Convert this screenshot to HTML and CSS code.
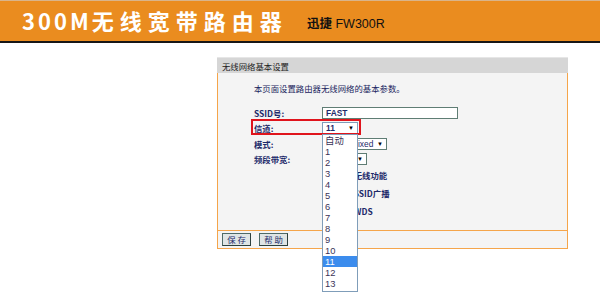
FILE: index.html
```html
<!DOCTYPE html>
<html lang="zh-CN">
<head>
<meta charset="utf-8">
<title>300M无线宽带路由器</title>
<link rel="stylesheet" href="styles.css">
</head>
<body>
<header class="topbar">
  <div class="brand"><span class="brand-num">300M</span>无线宽带路由器</div>
  <div class="model"><span class="model-cn">迅捷</span> FW300R</div>
</header>

<section class="panel">
  <div class="panel-head">无线网络基本设置</div>
  <div class="panel-body">
    <div class="intro">本页面设置路由器无线网络的基本参数。</div>
    <div class="form">
      <div class="row r15">
        <div class="label">SSID号:</div>
        <div class="ctl"><div class="input">FAST</div></div>
      </div>
      <div class="row r16 channel-row">
        <div class="label">信道:</div>
        <div class="ctl">
          <div class="select sel-open"><span>11</span><span class="arrow">▼</span></div>
        </div>
        <div class="mark"></div>
        <ul class="droplist">
          <li>自动</li><li>1</li><li>2</li><li>3</li><li>4</li><li>5</li><li>6</li>
          <li>7</li><li>8</li><li>9</li><li>10</li><li class="active">11</li><li>12</li><li>13</li>
        </ul>
      </div>
      <div class="row r15">
        <div class="label">模式:</div>
        <div class="ctl"><div class="select sel-mode"><span>11bgn mixed</span><span class="arrow">▼</span></div></div>
      </div>
      <div class="row r15">
        <div class="label">频段带宽:</div>
        <div class="ctl"><div class="select sel-bw"><span>自动</span><span class="arrow">▼</span></div></div>
      </div>
      <div class="row r18">
        <div class="label"></div>
        <div class="ctl"><span class="box"></span><span class="cbtext">开启无线功能</span></div>
      </div>
      <div class="row r18">
        <div class="label"></div>
        <div class="ctl"><span class="box"></span><span class="cbtext">开启SSID广播</span></div>
      </div>
      <div class="row r18">
        <div class="label"></div>
        <div class="ctl"><span class="box"></span><span class="cbtext">开启WDS</span></div>
      </div>
    </div>
  </div>
  <div class="panel-foot">
    <button class="btn">保存</button>
    <button class="btn">帮助</button>
  </div>
</section>
</body>
</html>
```
FILE: styles.css
```css
* { box-sizing: border-box; }
html, body { margin: 0; padding: 0; background: #ffffff; }
html { height: 300px; }
body {
  height: 300px;
  overflow: hidden;
  font-family: "Noto Sans CJK SC", "Liberation Sans", sans-serif;
  color: #1d2a6a;
}

.topbar {
  height: 43px;
  background: #ea8c1f;
  border-top: 1px solid #d9b48a;
  border-bottom: 2px solid #161616;
  display: flex;
  align-items: center;
  padding-left: 22px;
}
.brand {
  color: #ffffff;
  font-family: "Noto Sans CJK SC", "Liberation Sans", sans-serif;
  font-weight: bold;
  font-size: 22px;
  letter-spacing: 6px;
  line-height: 26px;
  margin-top: -3px;
  width: 285px;
  white-space: nowrap;
}
.brand-num { letter-spacing: 3px; }
.model {
  color: #111111;
  font-family: "Liberation Sans", "Noto Sans CJK SC", sans-serif;
  font-size: 12.5px;
  line-height: 14px;
  margin-top: 5px;
  white-space: nowrap;
}
.model-cn { font-family: "Noto Sans CJK SC", serif; font-weight: bold; }

.panel {
  margin: 14px 0 0 217px;
  width: 351px;
  font-size: 8.4px;
}
.panel-head {
  height: 16px;
  line-height: 16px;
  background: #d6d6d6;
  border-top: 1px solid #e6e6e6;
  padding-left: 5px;
  color: #222222;
}
.panel-body {
  background: #f4f4f4;
  border-left: 1px solid #f5a54a;
  border-right: 1px solid #f5a54a;
  padding: 8px 0 10px 36px;
}
.intro {
  height: 14px;
  line-height: 14px;
  margin-bottom: 10px;
  color: #1a2560;
}
.form { display: flex; flex-direction: column; }
.row {
  display: grid;
  grid-template-columns: 68px 1fr;
  align-items: center;
  position: relative;
}
.r15 { height: 15px; }
.r16 { height: 16px; }
.r18 { height: 18px; }
.label { font-weight: bold; color: #1d2a6a; white-space: nowrap; }
.ctl { display: flex; align-items: center; height: 100%; }

.input {
  width: 136px;
  height: 12px;
  line-height: 10px;
  background: #ffffff;
  border: 1px solid #5f7d74;
  padding-left: 3px;
  font-family: "Liberation Sans", sans-serif;
  font-weight: bold;
  font-size: 8.4px;
  color: #1d2a6a;
}
.select {
  height: 12px;
  background: #ffffff;
  border: 1px solid #5f7d74;
  display: flex;
  justify-content: space-between;
  align-items: center;
  padding: 0 3px 0 3px;
  font-family: "Liberation Sans", "Noto Sans CJK SC", sans-serif;
  font-size: 8.4px;
  color: #1d2a6a;
  white-space: nowrap;
  overflow: hidden;
}
.arrow { font-size: 6px; color: #000000; }
.sel-open { width: 36px; border-color: #7f9db9; font-weight: bold; margin-top: -1px; }
.sel-mode { width: 65px; }
.sel-bw { width: 45px; }

.box {
  width: 10px;
  height: 10px;
  border: 1px solid #5f7d74;
  background: #ffffff;
  margin-right: 5px;
}
.cbtext { font-weight: bold; color: #1d2a6a; white-space: nowrap; }

.mark {
  position: absolute;
  left: -3px;
  top: -1px;
  width: 110px;
  height: 16px;
  border: 2px solid #e0141c;
  pointer-events: none;
}
.droplist {
  position: absolute;
  left: 68px;
  top: 14px;
  width: 36px;
  margin: 0;
  padding: 0 0 2px 0;
  list-style: none;
  background: #ffffff;
  border: 1px solid #7f9db9;
  z-index: 5;
  font-family: "Liberation Sans", "Noto Sans CJK SC", sans-serif;
  font-size: 9.4px;
  color: #3a3358;
}
.droplist li {
  height: 11px;
  line-height: 11px;
  padding-left: 2px;
}
.droplist li.active { background: #3b8ced; color: #ffffff; }

.panel-foot {
  height: 19px;
  background: #f4f4f4;
  border: 1px solid #f5a54a;
  padding: 2px 0 0 4px;
  display: flex;
  gap: 8px;
  align-items: flex-start;
}
.btn {
  width: 29px;
  height: 13px;
  padding: 0;
  margin: 0;
  background: #dfe5e5;
  border: 1px solid #4f6a66;
  border-right-color: #2d403d;
  border-bottom-color: #2d403d;
  font-family: "Noto Sans CJK SC", sans-serif;
  font-size: 8.4px;
  letter-spacing: 2px;
  text-indent: 2px;
  line-height: 11px;
  color: #1d2a6a;
}
```
